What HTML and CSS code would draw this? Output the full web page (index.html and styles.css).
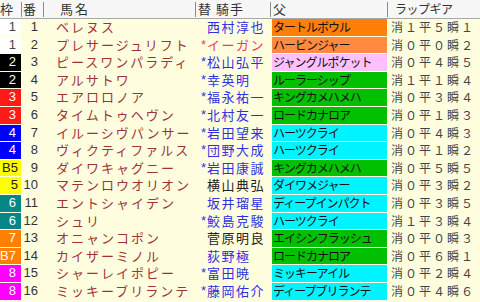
FILE: index.html
```html
<!DOCTYPE html>
<html lang="ja">
<head>
<meta charset="utf-8">
<link rel="stylesheet" href="styles.css">
</head>
<body>
<div class="table">
  <div class="head">
    <div class="h h-waku">枠</div>
    <div class="h h-ban">番</div>
    <div class="h h-name">馬名</div>
    <div class="h h-jockey">替 騎手</div>
    <div class="h h-sire">父</div>
    <div class="h h-gear">ラップギア</div>
  </div>
  <div class="body">
    <div class="row"><div class="waku w1">1</div><div class="ban">1</div><div class="name">ベレヌス</div><div class="chg"></div><div class="jk blue">西村淳也</div><div class="sire s-orange">タートルボウル</div><div class="gear">消１平５瞬１</div></div>
    <div class="row"><div class="waku w1">1</div><div class="ban">2</div><div class="name">プレサージュリフト</div><div class="chg red">*</div><div class="jk red">イーガン</div><div class="sire s-orange2">ハービンジャー</div><div class="gear">消０平０瞬２</div></div>
    <div class="row"><div class="waku w2">2</div><div class="ban">3</div><div class="name">ピースワンパラディ</div><div class="chg blue">*</div><div class="jk blue">松山弘平</div><div class="sire s-pink">ジャングルポケット</div><div class="gear">消０平４瞬５</div></div>
    <div class="row"><div class="waku w2">2</div><div class="ban">4</div><div class="name">アルサトワ</div><div class="chg blue">*</div><div class="jk blue">幸英明</div><div class="sire s-green">ルーラーシップ</div><div class="gear">消１平１瞬４</div></div>
    <div class="row"><div class="waku w3">3</div><div class="ban">5</div><div class="name">エアロロノア</div><div class="chg blue">*</div><div class="jk blue">福永祐一</div><div class="sire s-green">キングカメハメハ</div><div class="gear">消０平３瞬４</div></div>
    <div class="row"><div class="waku w3">3</div><div class="ban">6</div><div class="name">タイムトゥヘヴン</div><div class="chg blue">*</div><div class="jk blue">北村友一</div><div class="sire s-green">ロードカナロア</div><div class="gear">消０平１瞬３</div></div>
    <div class="row"><div class="waku w4">4</div><div class="ban">7</div><div class="name">イルーシヴパンサー</div><div class="chg blue">*</div><div class="jk blue">岩田望来</div><div class="sire s-cyan">ハーツクライ</div><div class="gear">消０平４瞬３</div></div>
    <div class="row"><div class="waku w4">4</div><div class="ban">8</div><div class="name">ヴィクティファルス</div><div class="chg blue">*</div><div class="jk blue">団野大成</div><div class="sire s-cyan">ハーツクライ</div><div class="gear">消０平１瞬２</div></div>
    <div class="row"><div class="waku w5">B5</div><div class="ban">9</div><div class="name">ダイワキャグニー</div><div class="chg blue">*</div><div class="jk blue">岩田康誠</div><div class="sire s-green">キングカメハメハ</div><div class="gear">消０平５瞬５</div></div>
    <div class="row"><div class="waku w5">5</div><div class="ban">10</div><div class="name">マテンロウオリオン</div><div class="chg"></div><div class="jk black">横山典弘</div><div class="sire s-cyan">ダイワメジャー</div><div class="gear">消０平３瞬２</div></div>
    <div class="row"><div class="waku w6">6</div><div class="ban">11</div><div class="name">エントシャイデン</div><div class="chg"></div><div class="jk blue">坂井瑠星</div><div class="sire s-cyan">ディープインパクト</div><div class="gear">消０平３瞬５</div></div>
    <div class="row"><div class="waku w6">6</div><div class="ban">12</div><div class="name">シュリ</div><div class="chg blue">*</div><div class="jk blue">鮫島克駿</div><div class="sire s-cyan">ハーツクライ</div><div class="gear">消１平３瞬４</div></div>
    <div class="row"><div class="waku w7">7</div><div class="ban">13</div><div class="name">オニャンコポン</div><div class="chg"></div><div class="jk black">菅原明良</div><div class="sire s-green">エイシンフラッシュ</div><div class="gear">消０平０瞬３</div></div>
    <div class="row"><div class="waku w7">B7</div><div class="ban">14</div><div class="name">カイザーミノル</div><div class="chg"></div><div class="jk blue">荻野極</div><div class="sire s-green">ロードカナロア</div><div class="gear">消０平６瞬１</div></div>
    <div class="row"><div class="waku w8">8</div><div class="ban">15</div><div class="name">シャーレイポピー</div><div class="chg blue">*</div><div class="jk blue">富田暁</div><div class="sire s-cyan">ミッキーアイル</div><div class="gear">消０平２瞬４</div></div>
    <div class="row"><div class="waku w8">8</div><div class="ban">16</div><div class="name">ミッキーブリランテ</div><div class="chg blue">*</div><div class="jk blue">藤岡佑介</div><div class="sire s-cyan">ディープブリランテ</div><div class="gear">消０平４瞬６</div></div>
  </div>
</div>
</body>
</html>
```

FILE: styles.css
```css
* { box-sizing: border-box; }
html, body {
  margin: 0;
  padding: 0;
  width: 480px;
  height: 302px;
  overflow: hidden;
  background: #ffffe0;
}
.table {
  width: 480px;
  font-family: "Noto Sans CJK JP", "Liberation Sans", sans-serif;
}
.head, .row {
  display: grid;
  grid-template-columns: 22px 22px 152px 11px 64px 117px 92px;
}
.head {
  height: 19px;
  background: #f7f7f7;
  border-bottom: 1px solid #a8a8a8;
  font-size: 13px;
  color: #333;
  line-height: 18px;
  grid-template-columns: 22px 22px 152px 75px 117px 92px;
}
.h {
  position: relative;
  white-space: nowrap;
}
.h::after {
  content: "";
  position: absolute;
  right: 0;
  top: 2px;
  bottom: 1px;
  width: 1px;
  background: #8c8c8c;
}
.h-waku { padding-left: 0; }
.h-ban { padding-left: 1px; }
.h-name { padding-left: 16px; letter-spacing: 2px; }
.h-jockey { padding-left: 2px; letter-spacing: 1px; }
.h-sire { padding-left: 2px; }
.h-gear { padding-left: 7px; letter-spacing: -0.5px; font-size: 12px; }
.h-gear::after { display: none; }

.body {
  display: grid;
  grid-auto-rows: 17.6px;
}
.row {
  height: 17.6px;
  line-height: 16.6px;
  font-size: 13px;
  white-space: nowrap;
}
.waku {
  height: 16.6px;
  margin-right: 1px;
  text-align: right;
  padding-right: 5px;
  font-family: "Liberation Sans", sans-serif;
  font-size: 13px;
  color: #fff;
}
.w1 { background: #fff; color: #444; }
.w2 { background: #000; }
.w3 { background: #ff1a1a; }
.w4 { background: #0000ff; }
.w5 { background: #ffff00; color: #222; padding-right: 3px; }
.w6 { background: #068686; }
.w7 { background: #ff8000; }
.w8 { background: #ff00ff; }
.ban {
  text-align: right;
  padding-right: 6px;
  font-family: "Liberation Sans", sans-serif;
  color: #333;
}
.name {
  padding-left: 12px;
  letter-spacing: 2px;
  color: #a03232;
}
.chg {
  text-align: right;
  padding-right: 1px;
  font-family: "Liberation Sans", sans-serif;
  font-size: 13px;
}
.jk {
  letter-spacing: 1.5px;
}
.blue { color: #3030e0; }
.red { color: #f03a5a; }
.black { color: #222; }
.sire {
  height: 16.6px;
  margin-left: 1px;
  margin-right: 1px;
  padding-left: 1px;
  font-size: 12px;
  letter-spacing: -1px;
  color: #111;
}
.s-orange { background: #ff7f0a; }
.s-orange2 { background: #ff8a40; }
.s-pink { background: #ffc0ff; }
.s-green { background: #00c000; }
.s-cyan { background: #00f4ff; }
.gear {
  padding-left: 3px;
  font-size: 12px;
  letter-spacing: 2px;
  color: #444;
}
```
